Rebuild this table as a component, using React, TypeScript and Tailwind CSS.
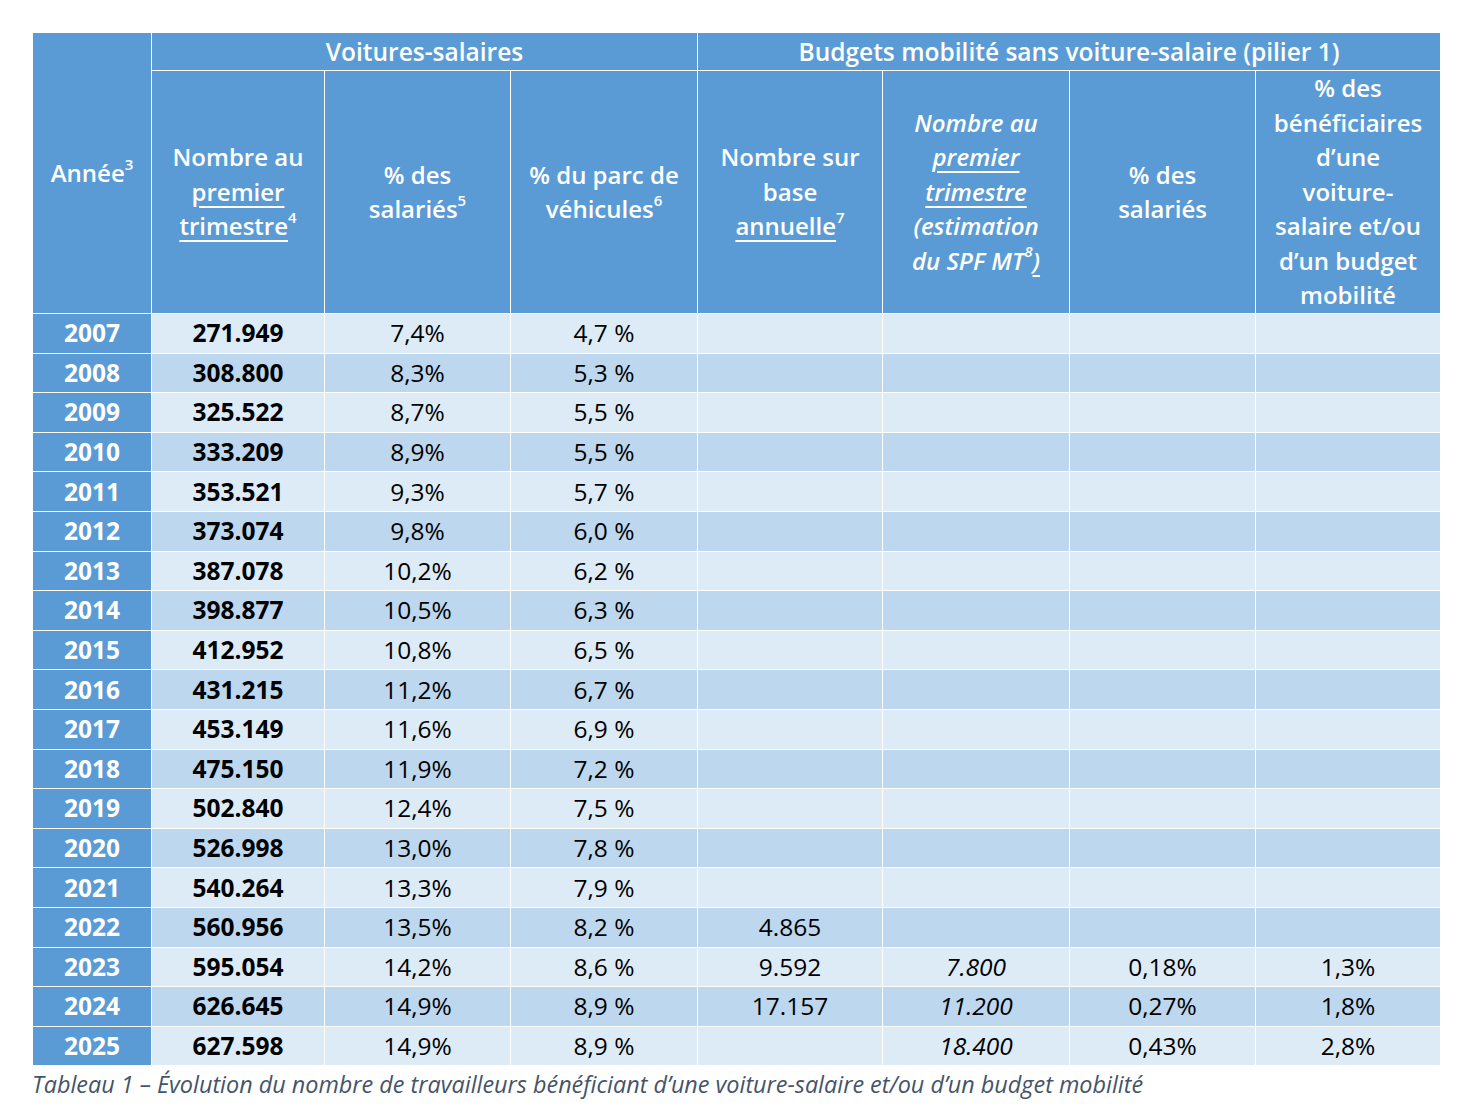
import React from "react";

type Row = { y: string; a: string; b: string; c: string; d?: string; e?: string; f?: string; g?: string };

const rows: Row[] = [
  { y: "2007", a: "271.949", b: "7,4%", c: "4,7 %" },
  { y: "2008", a: "308.800", b: "8,3%", c: "5,3 %" },
  { y: "2009", a: "325.522", b: "8,7%", c: "5,5 %" },
  { y: "2010", a: "333.209", b: "8,9%", c: "5,5 %" },
  { y: "2011", a: "353.521", b: "9,3%", c: "5,7 %" },
  { y: "2012", a: "373.074", b: "9,8%", c: "6,0 %" },
  { y: "2013", a: "387.078", b: "10,2%", c: "6,2 %" },
  { y: "2014", a: "398.877", b: "10,5%", c: "6,3 %" },
  { y: "2015", a: "412.952", b: "10,8%", c: "6,5 %" },
  { y: "2016", a: "431.215", b: "11,2%", c: "6,7 %" },
  { y: "2017", a: "453.149", b: "11,6%", c: "6,9 %" },
  { y: "2018", a: "475.150", b: "11,9%", c: "7,2 %" },
  { y: "2019", a: "502.840", b: "12,4%", c: "7,5 %" },
  { y: "2020", a: "526.998", b: "13,0%", c: "7,8 %" },
  { y: "2021", a: "540.264", b: "13,3%", c: "7,9 %" },
  { y: "2022", a: "560.956", b: "13,5%", c: "8,2 %", d: "4.865" },
  { y: "2023", a: "595.054", b: "14,2%", c: "8,6 %", d: "9.592", e: "7.800", f: "0,18%", g: "1,3%" },
  { y: "2024", a: "626.645", b: "14,9%", c: "8,9 %", d: "17.157", e: "11.200", f: "0,27%", g: "1,8%" },
  { y: "2025", a: "627.598", b: "14,9%", c: "8,9 %", e: "18.400", f: "0,43%", g: "2,8%" },
];

const th = "border border-white bg-[#5B9BD5] text-white font-semibold text-center align-middle p-0";
const sup = "text-[15px] align-[5px] leading-none";

export default function App() {
  return (
    <div className="bg-white w-[1467px] h-[1114px] pt-[32px] pl-[32px]" style={{ fontFamily: '"Open Sans", "Noto Sans", sans-serif' }}>
      <table className="table-fixed border-collapse w-[1408px]">
        <colgroup>
          <col className="w-[119px]" />
          <col className="w-[173px]" />
          <col className="w-[186px]" />
          <col className="w-[187px]" />
          <col className="w-[185px]" />
          <col className="w-[187px]" />
          <col className="w-[186px]" />
          <col className="w-[185px]" />
        </colgroup>
        <thead>
          <tr className="h-[38px]">
            <th rowSpan={2} className={th + " text-[24px] leading-[34px]"}>
              Année<sup className={sup}>3</sup>
            </th>
            <th colSpan={3} className={th + " text-[24.5px] leading-[34px]"}>Voitures-salaires</th>
            <th colSpan={4} className={th + " text-[24.5px] leading-[34px]"}>
              Budgets mobilité sans voiture-salaire (pilier 1)
            </th>
          </tr>
          <tr className="h-[243px] text-[24px] leading-[34.5px]">
            <th className={th}>
              Nombre au
              <br />
              <span className="underline underline-offset-[5px]">premier</span>
              <br />
              <span className="underline underline-offset-[5px]">trimestre</span>
              <sup className={sup}>4</sup>
            </th>
            <th className={th}>
              % des
              <br />
              salariés<sup className={sup}>5</sup>
            </th>
            <th className={th}>
              % du parc de
              <br />
              véhicules<sup className={sup}>6</sup>
            </th>
            <th className={th}>
              Nombre sur
              <br />
              base
              <br />
              <span className="underline underline-offset-[5px]">annuelle</span>
              <sup className={sup}>7</sup>
            </th>
            <th className={th + " italic"}>
              Nombre au
              <br />
              <span className="underline underline-offset-[5px]">premier</span>
              <br />
              <span className="underline underline-offset-[5px]">trimestre</span>
              <br />
              (estimation
              <br />
              du SPF MT<sup className={sup}>8</sup>
              <span className="underline underline-offset-[5px]">)</span>
            </th>
            <th className={th}>
              % des
              <br />
              salariés
            </th>
            <th className={th}>
              % des
              <br />
              bénéficiaires
              <br />
              d’une
              <br />
              voiture-
              <br />
              salaire et/ou
              <br />
              d’un budget
              <br />
              mobilité
            </th>
          </tr>
        </thead>
        <tbody className="text-[24.5px] text-black">
          {rows.map((r, i) => {
            const bg = i % 2 === 0 ? "bg-[#DDEBF7]" : "bg-[#BDD7EE]";
            const td = `border border-white ${bg} text-center align-middle p-0 leading-[30px]`;
            return (
              <tr key={r.y} className="h-[39.6px]">
                <td className="border border-white bg-[#5B9BD5] text-white font-bold text-center align-middle p-0 leading-[30px]">{r.y}</td>
                <td className={td + " font-bold"}>{r.a}</td>
                <td className={td}>{r.b}</td>
                <td className={td}>{r.c}</td>
                <td className={td}>{r.d ?? ""}</td>
                <td className={td + " italic"}>{r.e ?? ""}</td>
                <td className={td}>{r.f ?? ""}</td>
                <td className={td}>{r.g ?? ""}</td>
              </tr>
            );
          })}
        </tbody>
      </table>
      <div className="mt-[2px] text-[23.4px] italic text-[#44546A] leading-[32px]">
        Tableau 1 – Évolution du nombre de travailleurs bénéficiant d’une voiture-salaire et/ou d’un budget mobilité
      </div>
    </div>
  );
}
